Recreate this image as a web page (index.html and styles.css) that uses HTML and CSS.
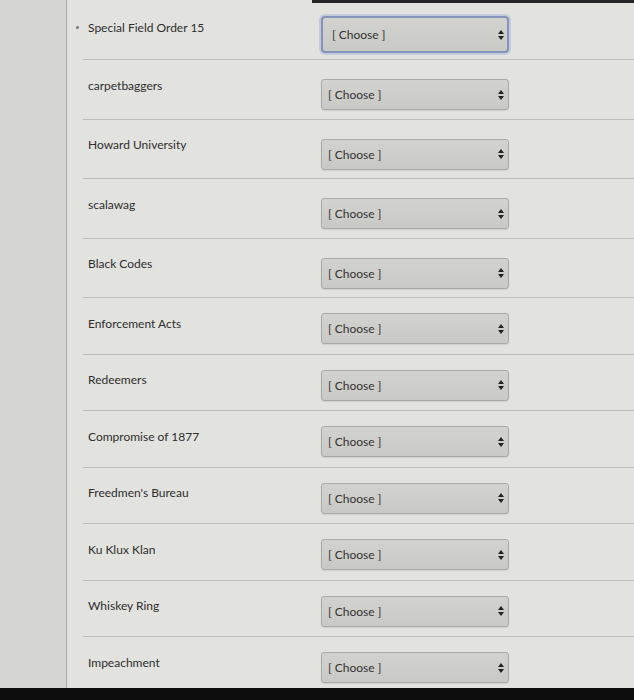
FILE: index.html
```html
<!DOCTYPE html>
<html lang="en">
<head>
    <meta charset="UTF-8">
    <title>Matching Question</title>
    <link rel="stylesheet" href="styles.css">
</head>
<body>
    <div class="page">
        <!-- Left course nav strip -->
        <div class="sidebar"></div>

        <!-- Question body -->
        <div class="content">
            <div class="topbar"><div class="topbar-dark"></div></div>

            <div class="answers">
                <div class="row">
                    <div class="label"><span class="bullet"></span>Special Field Order 15</div>
                    <div class="select-wrap focused">
                        <select><option>[ Choose ]</option></select>
                        <svg class="arrows" width="6" height="10" viewBox="0 0 6 10"><path d="M3 0 L6 4 L0 4 Z M0 6 L6 6 L3 10 Z"/></svg>
                    </div>
                </div>
                <div class="row">
                    <div class="label">carpetbaggers</div>
                    <div class="select-wrap">
                        <select><option>[ Choose ]</option></select>
                        <svg class="arrows" width="6" height="10" viewBox="0 0 6 10"><path d="M3 0 L6 4 L0 4 Z M0 6 L6 6 L3 10 Z"/></svg>
                    </div>
                </div>
                <div class="row">
                    <div class="label">Howard University</div>
                    <div class="select-wrap">
                        <select><option>[ Choose ]</option></select>
                        <svg class="arrows" width="6" height="10" viewBox="0 0 6 10"><path d="M3 0 L6 4 L0 4 Z M0 6 L6 6 L3 10 Z"/></svg>
                    </div>
                </div>
                <div class="row">
                    <div class="label">scalawag</div>
                    <div class="select-wrap">
                        <select><option>[ Choose ]</option></select>
                        <svg class="arrows" width="6" height="10" viewBox="0 0 6 10"><path d="M3 0 L6 4 L0 4 Z M0 6 L6 6 L3 10 Z"/></svg>
                    </div>
                </div>
                <div class="row">
                    <div class="label">Black Codes</div>
                    <div class="select-wrap">
                        <select><option>[ Choose ]</option></select>
                        <svg class="arrows" width="6" height="10" viewBox="0 0 6 10"><path d="M3 0 L6 4 L0 4 Z M0 6 L6 6 L3 10 Z"/></svg>
                    </div>
                </div>
                <div class="row">
                    <div class="label">Enforcement Acts</div>
                    <div class="select-wrap">
                        <select><option>[ Choose ]</option></select>
                        <svg class="arrows" width="6" height="10" viewBox="0 0 6 10"><path d="M3 0 L6 4 L0 4 Z M0 6 L6 6 L3 10 Z"/></svg>
                    </div>
                </div>
                <div class="row">
                    <div class="label">Redeemers</div>
                    <div class="select-wrap">
                        <select><option>[ Choose ]</option></select>
                        <svg class="arrows" width="6" height="10" viewBox="0 0 6 10"><path d="M3 0 L6 4 L0 4 Z M0 6 L6 6 L3 10 Z"/></svg>
                    </div>
                </div>
                <div class="row">
                    <div class="label">Compromise of 1877</div>
                    <div class="select-wrap">
                        <select><option>[ Choose ]</option></select>
                        <svg class="arrows" width="6" height="10" viewBox="0 0 6 10"><path d="M3 0 L6 4 L0 4 Z M0 6 L6 6 L3 10 Z"/></svg>
                    </div>
                </div>
                <div class="row">
                    <div class="label">Freedmen's Bureau</div>
                    <div class="select-wrap">
                        <select><option>[ Choose ]</option></select>
                        <svg class="arrows" width="6" height="10" viewBox="0 0 6 10"><path d="M3 0 L6 4 L0 4 Z M0 6 L6 6 L3 10 Z"/></svg>
                    </div>
                </div>
                <div class="row">
                    <div class="label">Ku Klux Klan</div>
                    <div class="select-wrap">
                        <select><option>[ Choose ]</option></select>
                        <svg class="arrows" width="6" height="10" viewBox="0 0 6 10"><path d="M3 0 L6 4 L0 4 Z M0 6 L6 6 L3 10 Z"/></svg>
                    </div>
                </div>
                <div class="row">
                    <div class="label">Whiskey Ring</div>
                    <div class="select-wrap">
                        <select><option>[ Choose ]</option></select>
                        <svg class="arrows" width="6" height="10" viewBox="0 0 6 10"><path d="M3 0 L6 4 L0 4 Z M0 6 L6 6 L3 10 Z"/></svg>
                    </div>
                </div>
                <div class="row last">
                    <div class="label">Impeachment</div>
                    <div class="select-wrap">
                        <select><option>[ Choose ]</option></select>
                        <svg class="arrows" width="6" height="10" viewBox="0 0 6 10"><path d="M3 0 L6 4 L0 4 Z M0 6 L6 6 L3 10 Z"/></svg>
                    </div>
                </div>
            </div>
        </div>
    </div>
</body>
</html>
```

FILE: styles.css
```css
/* Global Styles */
body {
    font-family: 'Lato', 'Liberation Sans', sans-serif;
    margin: 0;
    padding: 0;
    background-color: #0c0c0c;
    color: #333;
}

.page {
    display: flex;
    height: 688px;
}

/* Sidebar */
.sidebar {
    width: 66px;
    background-color: #d6d6d2;
    border-right: 1px solid #a8a8a4;
}

/* Content */
.content {
    flex: 1;
    background-color: #e2e2de;
}

.topbar {
    height: 3px;
}

.topbar-dark {
    margin-left: 245px;
    height: 3px;
    background-color: #262626;
}

.answers {
    padding-left: 16px;
}

/* Rows get a little shorter further down the list */
.row {
    display: grid;
    grid-template-columns: 238px 188px;
    height: 56.5px;
    box-sizing: border-box;
    border-bottom: 1px solid #bdbdb8;
}

.row:nth-child(-n+5) {
    height: 59.5px;
}

.row:first-child {
    height: 57px;
}

.row.last {
    border-bottom: none;
}

.label {
    display: flex;
    align-items: center;
    height: 14px;
    padding: 18px 0 0 5px;
    font-size: 12px;
    color: #2e2e2e;
}

.row:first-child .label {
    padding-top: 17px;
}

.bullet {
    width: 3px;
    height: 3px;
    border-radius: 50%;
    background-color: #777;
    margin-left: -12px;
    margin-right: 9px;
}

/* Select boxes */
.select-wrap {
    position: relative;
    margin-top: 15px;
    height: 31px;
}

.row:nth-child(-n+5) .select-wrap {
    margin-top: 19px;
}

.row:first-child .select-wrap {
    margin-top: 13px;
    height: 37px;
}

.select-wrap select {
    appearance: none;
    -webkit-appearance: none;
    width: 100%;
    height: 100%;
    padding: 0 20px 0 6px;
    font-family: 'Lato', 'Liberation Sans', sans-serif;
    font-size: 12px;
    color: #333;
    background: linear-gradient(#d2d2ce, #c9c9c5);
    border: 1px solid #a9a9a5;
    border-radius: 3px;
    box-shadow: 0 1px 1px rgba(0, 0, 0, 0.08);
}

.select-wrap.focused select {
    border: 2px solid #8393bb;
    border-radius: 4px;
    box-shadow: 0 0 0 2px #c3cad9;
    padding-left: 9px;
}

.arrows {
    position: absolute;
    right: 5px;
    top: 50%;
    margin-top: -5px;
    fill: #222;
}
```
